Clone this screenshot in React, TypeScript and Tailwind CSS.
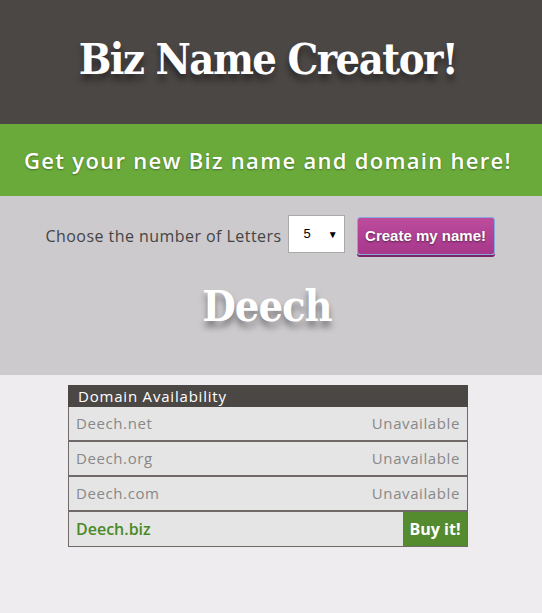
import React from "react";

const slab = { fontFamily: '"DejaVu Serif", "Liberation Serif", serif' };
const sans = { fontFamily: '"Open Sans", "Liberation Sans", sans-serif' };

const rows = ["Deech.net", "Deech.org", "Deech.com"];

export default function App() {
  return (
    <div className="w-[542px] min-h-[613px] bg-[#eeecef]" style={sans}>
      <header className="h-[124px] bg-[#4b4745] flex items-center justify-center pb-[5px]">
        <h1
          className="text-white font-bold text-[43px] leading-none tracking-[-1.5px] [font-stretch:condensed] [text-shadow:0_6px_6px_rgba(0,0,0,0.45)] ml-[-6px]"
          style={slab}
        >
          Biz Name Creator!
        </h1>
      </header>
      <div className="h-[72px] bg-[#6aaa3a] flex items-center justify-center">
        <h2 className="text-white font-semibold text-[22px] leading-none tracking-[1.3px] ml-[-6px] [text-shadow:0_1px_2px_rgba(0,0,0,0.35)]">
          Get your new Biz name and domain here!
        </h2>
      </div>
      <section className="h-[179px] bg-[#cccacd] flex flex-col items-center pt-[19px]">
        <div className="flex items-start ml-[-2px]">
          <span className="text-[#444] text-[16px] tracking-[0.45px] mr-[6px] mt-[9px]">Choose the number of Letters</span>
          <div className="w-[57px] h-[38px] bg-white border border-[#a9a9a9] flex items-center justify-between pl-[15px] pr-[6px] text-[13px] text-black" style={{ fontFamily: '"Liberation Sans", sans-serif' }}>
            <span>5</span>
            <span className="text-[10px]">▼</span>
          </div>
          <button
            className="ml-[12px] mt-[2px] w-[138px] h-[38px] rounded-[3px] border border-[#86a8df] bg-gradient-to-b from-[#bd4c9d] to-[#a6378a] shadow-[0_2px_0_#7b2466] text-white font-bold text-[15px] [text-shadow:0_1px_2px_rgba(0,0,0,0.5)]"
            style={{ fontFamily: '"Liberation Sans", Arial, sans-serif' }}
          >
            Create my name!
          </button>
        </div>
        <div
          className="mt-[30px] ml-[-8px] text-white font-bold text-[43px] leading-none tracking-[-1px] [font-stretch:condensed] [text-shadow:0_6px_6px_rgba(0,0,0,0.4)]"
          style={slab}
        >
          Deech
        </div>
      </section>
      <div className="pt-[10px] flex justify-center">
        <div className="w-[400px] ml-[-6px]">
          <div className="h-[22px] bg-[#4b4745] text-white text-[15px] tracking-[0.8px] leading-[22px] pl-[10px]">
            Domain Availability
          </div>
          <div className="border-x border-[#6f6a68]">
            {rows.map((r) => (
              <div
                key={r}
                className="h-[35px] bg-[#e5e5e5] border-b-2 border-[#6f6a68] flex items-center justify-between px-[7px] text-[15px] tracking-[0.6px] text-[#888]"
              >
                <span>{r}</span>
                <span>Unavailable</span>
              </div>
            ))}
            <div className="h-[35px] bg-[#e5e5e5] border-b border-[#6f6a68] flex items-center justify-between text-[16px]">
              <span className="pl-[7px] text-[#4a8a26] font-semibold">Deech.biz</span>
              <span className="h-full w-[64px] bg-[#558b2f] text-white font-bold flex items-center justify-center">Buy it!</span>
            </div>
          </div>
        </div>
      </div>
    </div>
  );
}
